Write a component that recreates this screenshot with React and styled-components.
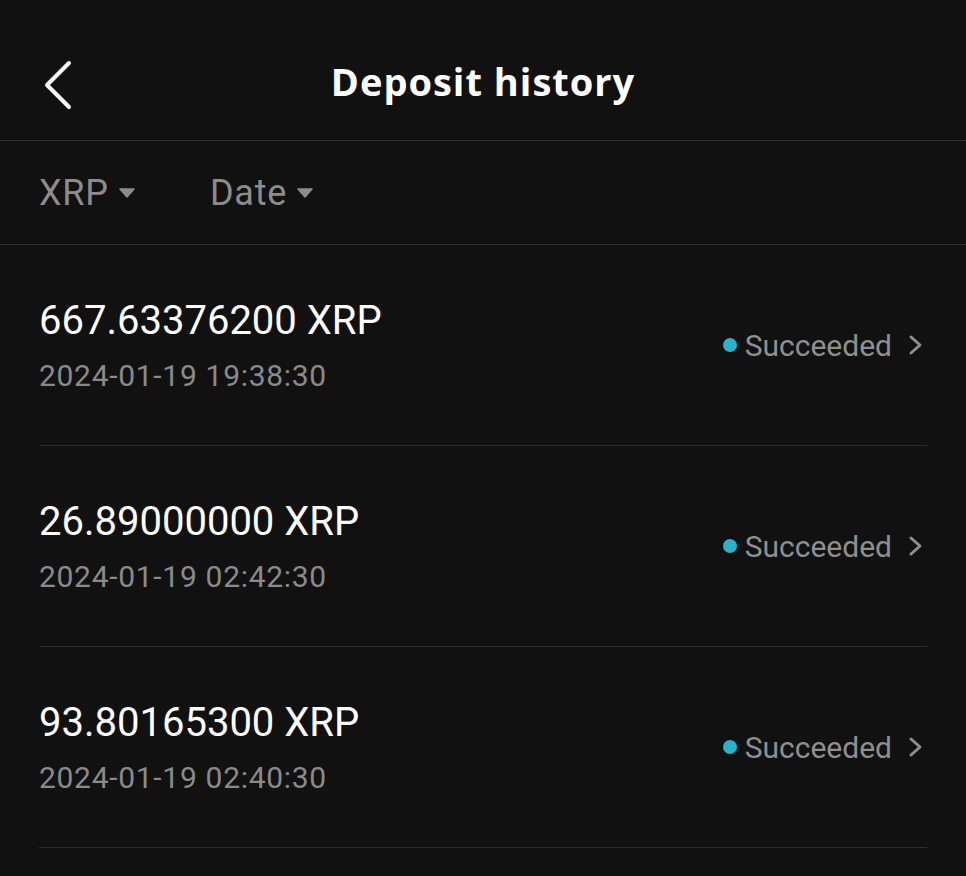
import React from "react";
import styled, { createGlobalStyle } from "styled-components";

const Global = createGlobalStyle`
  html, body { margin: 0; padding: 0; background: #111111; }
  body { font-family: Roboto, "Noto Sans", sans-serif; -webkit-font-smoothing: antialiased; }
  * { box-sizing: border-box; }
`;

const Page = styled.div`
  width: 966px;
  min-height: 876px;
  background: #111111;
  color: #ffffff;
`;

const Header = styled.header`
  position: relative;
  height: 141px;
  padding-top: 22px;
  display: flex;
  align-items: center;
  justify-content: center;
  border-bottom: 1px solid #2c2c2c;
`;

const BackButton = styled.button`
  position: absolute;
  left: 36px;
  top: 55px;
  width: 44px;
  height: 60px;
  padding: 0;
  background: none;
  border: none;
  display: flex;
  align-items: center;
  justify-content: center;
  cursor: pointer;
`;

const Title = styled.h1`
  margin: 0;
  font-family: "Open Sans", "Noto Sans", sans-serif;
  font-weight: 700;
  font-size: 38px;
  line-height: 1;
  color: #ffffff;
  letter-spacing: 1px;
`;

const FilterBar = styled.div`
  height: 104px;
  display: flex;
  align-items: center;
  gap: 75px;
  padding: 0 39px;
  border-bottom: 1px solid #2c2c2c;
`;

const Filter = styled.div`
  display: flex;
  align-items: center;
  gap: 10px;
  font-size: 36px;
  color: #8c8c8c;
  line-height: 1;
  letter-spacing: 0.8px;
`;

const List = styled.div`
  padding: 0 39px;
`;

const Row = styled.div`
  height: 201px;
  display: flex;
  align-items: center;
  justify-content: space-between;
  border-bottom: 1px solid #2c2c2c;
`;

const Info = styled.div`
  display: flex;
  flex-direction: column;
  gap: 13px;
`;

const Amount = styled.div`
  font-size: 40px;
  line-height: 48px;
  color: #ffffff;
`;

const Time = styled.div`
  font-size: 30px;
  line-height: 36px;
  color: #8a8a8a;
  letter-spacing: 0.7px;
`;

const Status = styled.div`
  display: flex;
  align-items: center;
  font-size: 30px;
  color: #8f8f8f;
  margin-right: 3px;
`;

const Dot = styled.span`
  width: 14px;
  height: 14px;
  border-radius: 50%;
  background: #27b3cc;
  margin-right: 8px;
`;

const Chevron = styled.svg`
  margin-left: 16px;
`;

const records = [
  { amount: "667.63376200 XRP", time: "2024-01-19 19:38:30" },
  { amount: "26.89000000 XRP", time: "2024-01-19 02:42:30" },
  { amount: "93.80165300 XRP", time: "2024-01-19 02:40:30" },
];

const Caret = () => (
  <svg width="16" height="10" viewBox="0 0 16 10">
    <path d="M1 1 L15 1 L8 9 Z" fill="#8c8c8c" stroke="#8c8c8c" strokeWidth="1.5" strokeLinejoin="round" />
  </svg>
);

export default function App() {
  return (
    <Page>
      <Global />
      <Header>
        <BackButton aria-label="Back">
          <svg width="32" height="52" viewBox="0 0 32 52">
            <polyline points="27,4 5,26 27,48" fill="none" stroke="#ffffff" strokeWidth="4" strokeLinecap="round" strokeLinejoin="round" />
          </svg>
        </BackButton>
        <Title>Deposit history</Title>
      </Header>
      <FilterBar>
        <Filter>XRP <Caret /></Filter>
        <Filter>Date <Caret /></Filter>
      </FilterBar>
      <List>
        {records.map((r) => (
          <Row key={r.time}>
            <Info>
              <Amount>{r.amount}</Amount>
              <Time>{r.time}</Time>
            </Info>
            <Status>
              <Dot />
              Succeeded
              <Chevron width="16" height="22" viewBox="0 0 16 22">
                <polyline points="3,3 12,11 3,19" fill="none" stroke="#8f8f8f" strokeWidth="3" strokeLinecap="round" strokeLinejoin="round" />
              </Chevron>
            </Status>
          </Row>
        ))}
      </List>
    </Page>
  );
}
